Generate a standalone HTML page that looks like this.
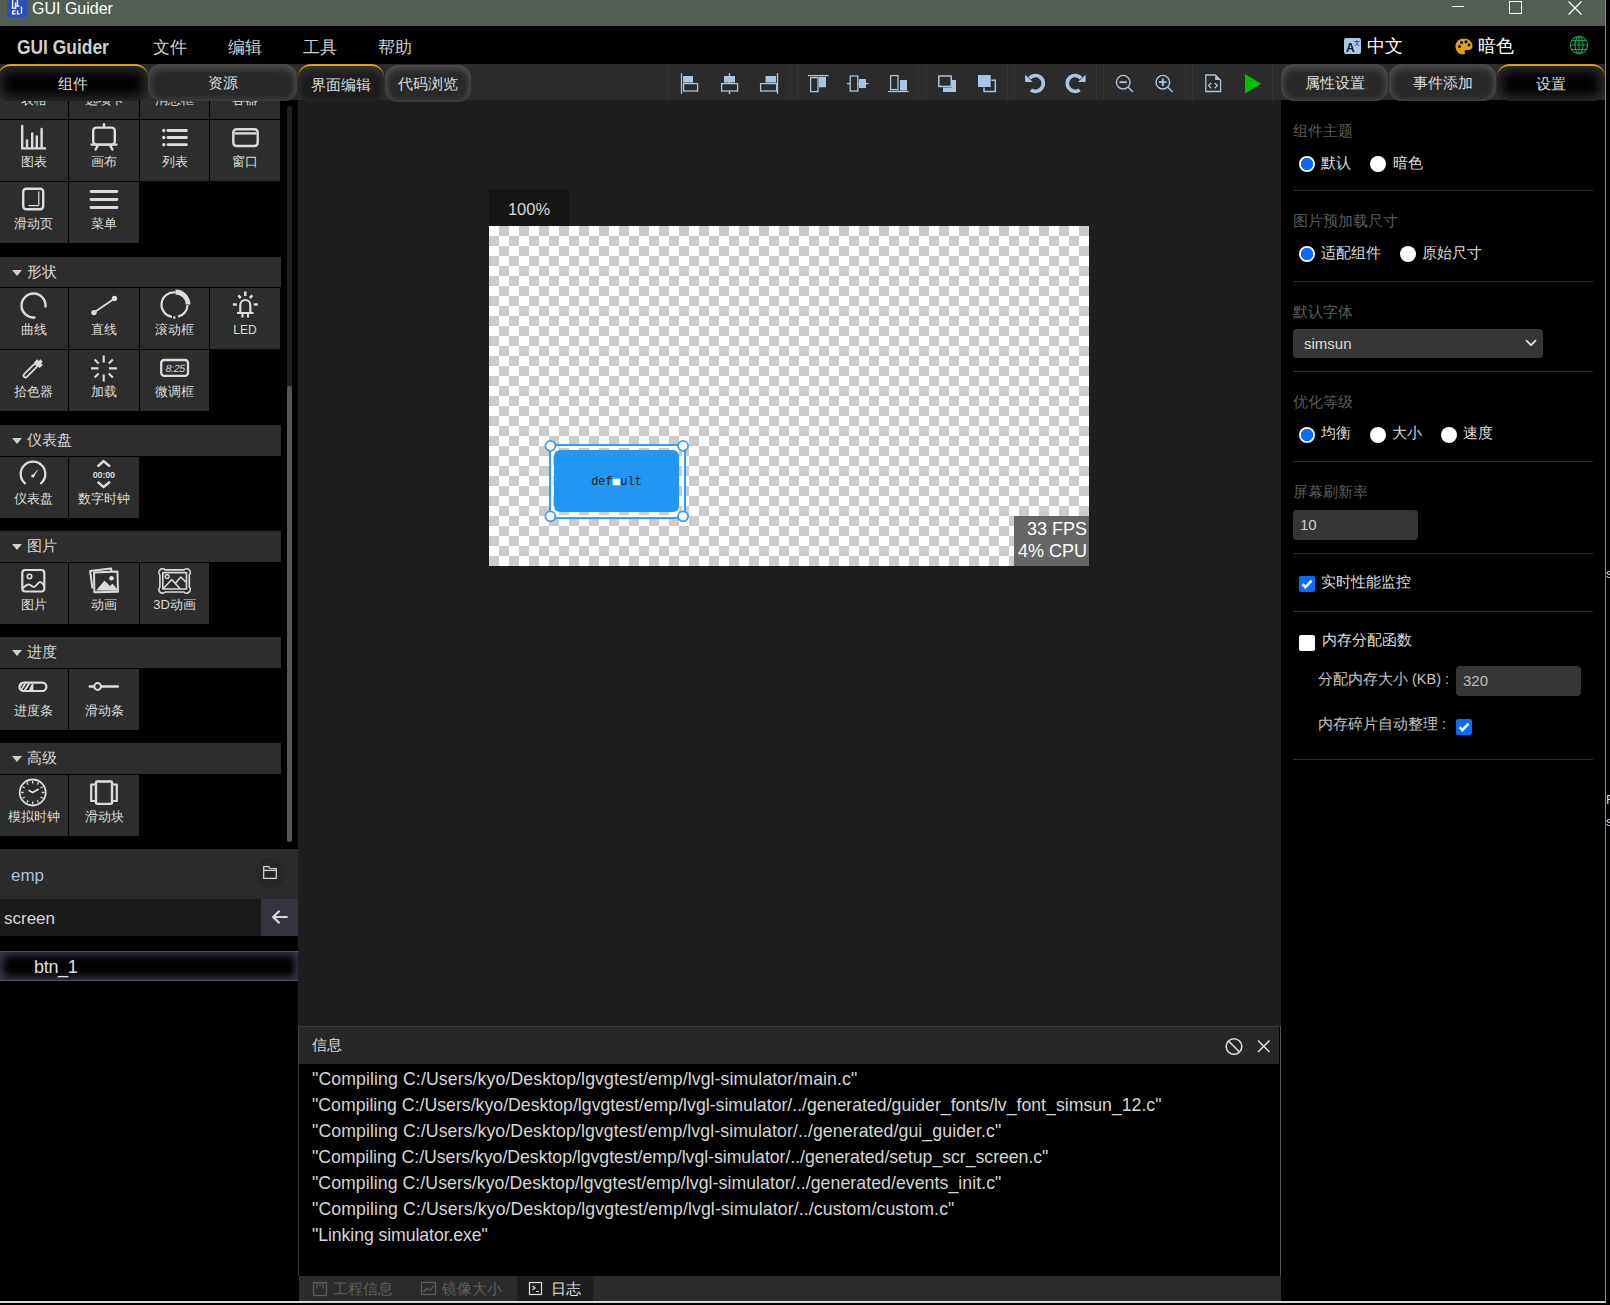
<!DOCTYPE html>
<html><head><meta charset="utf-8">
<style>
*{box-sizing:border-box;margin:0;padding:0}
html,body{width:1610px;height:1305px;overflow:hidden;background:#000;font-family:"Liberation Sans",sans-serif;color:#ddd}
.a{position:absolute;white-space:nowrap}
svg{position:absolute;overflow:visible}
#title{left:0;top:0;width:1606px;height:26px;background:#525e53}
#menubar{left:0;top:26px;width:1606px;height:38px;background:#000}
#tabrow{left:0;top:64px;width:1606px;height:36px;background:#2b2b2b}
.tab{position:absolute;z-index:3;top:64px;height:37px;border-radius:13px;text-align:center;font-size:15px;line-height:37px;color:#ddd}
.tab.off{background:#292929;box-shadow:inset 0 3px 8px 0 #525252,inset 0 0 7px 1px #404040}
.tab.on{background:#000;border-top:2px solid #e3a008;box-shadow:inset 0 0 12px 5px #2b2b2b;line-height:35px}
.tsep{position:absolute;top:64px;width:1px;height:36px;background:#343434}
.menu{position:absolute;top:37px;font-size:16.5px;line-height:20px;color:#d0d0d0}
#left{left:0;top:100px;width:298px;height:1201px;background:#000;overflow:hidden}
.cell{position:absolute;width:70px;height:61px;background:#2d2d2d;text-align:center;font-size:13px;color:#dcdcdc}
.cell svg{left:0;top:0;width:70px;height:61px}
.cell span{position:absolute;left:0;right:0;top:34px;line-height:16px}
.hdr{position:absolute;left:0;width:281px;height:30px;background:#2d2d2d;font-size:14.5px;line-height:30px;padding-left:27px;color:#d8d8d8}
.hdr:before{content:"";position:absolute;left:12px;top:13px;border-left:5px solid transparent;border-right:5px solid transparent;border-top:6px solid #cfcfcf}
#canvasarea{left:298px;top:100px;width:983px;height:926px;background:#1e1e1e}
#right{left:1281px;top:100px;width:324px;height:1201px;background:#000}
#info{left:298px;top:1026px;width:983px;height:275px;background:#000}
</style></head><body>
<!-- title bar -->
<div id="title" class="a"></div>
<div class="a" style="left:7px;top:0;width:20px;height:17px;background:#2a4fb8"></div>
<svg style="left:7px;top:0" width="20" height="17"><g fill="none" stroke="#fff" stroke-width="1.3"><path d="M5.6 0v8.2h2.3M10.4 0v5.5M8.6 2.5v6.5M9.5 6.2h2.8M14.5 6.5v7.3M5.6 10.8h3M5.6 10.8v3h3M10.5 10.5v3.3h2.2"/></g></svg>
<div class="a" style="left:32px;top:-1px;font-size:16px;line-height:20px;color:#fff">GUI Guider</div>
<div class="a" style="left:1452px;top:6px;width:12px;height:1px;background:#fff"></div>
<div class="a" style="left:1509px;top:1px;width:13px;height:13px;border:1px solid #fff"></div>
<svg style="left:1568px;top:1px" width="14" height="14"><path d="M0.5 0.5L13.5 13.5M13.5 0.5L0.5 13.5" stroke="#fff" stroke-width="1.1"/></svg>
<div class="a" style="left:0;top:1301px;width:1606px;height:2px;background:#d8d8d8"></div>
<div class="a" style="left:1606px;top:567px;font-size:13px;line-height:14px;color:#ddd">s</div><div class="a" style="left:1606px;top:793px;font-size:13px;line-height:14px;color:#ddd">F</div><div class="a" style="left:1606px;top:815px;font-size:13px;line-height:14px;color:#ddd">s</div>

<!-- menu bar -->
<div id="menubar" class="a"></div>
<div class="a" style="left:17px;top:36px;font-size:20px;font-weight:bold;line-height:22px;color:#cfcfcf;transform:scaleX(0.87);transform-origin:0 0">GUI Guider</div>
<div class="menu" style="left:153px">文件</div>
<div class="menu" style="left:228px">编辑</div>
<div class="menu" style="left:303px">工具</div>
<div class="menu" style="left:378px">帮助</div>
<svg style="left:1344px;top:38px" width="18" height="17"><rect x="0" y="0" width="17" height="16" rx="2" fill="#a8c8e6"/><text x="2" y="14" font-family="Liberation Sans" font-size="12" font-weight="bold" fill="#111">A</text><text x="10" y="7" font-size="6" fill="#111">文</text></svg>
<div class="a" style="left:1367px;top:35px;font-size:18px;line-height:22px;color:#fff">中文</div>
<svg style="left:1455px;top:38px" width="18" height="17" viewBox="0 0 18 17"><path d="M9 0.5C4 0.5 0.5 4 0.5 8.5c0 4.5 3.5 8 8 8 1.5 0 2-1 1.3-2.2-.7-1.2 0-2.3 1.4-2.3h2.3c2.5 0 4-1.5 4-4C17.5 3.5 13.7 0.5 9 0.5z" fill="#e0a010"/><circle cx="4.5" cy="8.5" r="1.5" fill="#000"/><circle cx="6.5" cy="4.5" r="1.5" fill="#000"/><circle cx="11" cy="3.8" r="1.5" fill="#000"/><circle cx="14" cy="7" r="1.4" fill="#000"/></svg>
<div class="a" style="left:1478px;top:35px;font-size:18px;line-height:22px;color:#fff">暗色</div>
<svg style="left:1569px;top:35px" width="20" height="20" viewBox="0 0 20 20"><g fill="none" stroke="#1f9a55" stroke-width="1.15"><circle cx="10" cy="10" r="8.6"/><ellipse cx="10" cy="10" rx="4" ry="8.6"/><path d="M10 1.4v17.2M1.4 10h17.2M2.8 5.5h14.4M2.8 14.5h14.4"/></g></svg>

<!-- tab row -->
<div id="tabrow" class="a"></div>
<div class="tab on" style="left:-2px;width:150px">组件</div>
<div class="tab off" style="left:148px;width:149px">资源</div>
<div class="tab on" style="left:298px;width:86px;height:38px;background:#1d1d1d;box-shadow:inset 0 6px 10px -2px #353535,inset 0 0 6px 2px #2a2a2a;line-height:37px">界面编辑</div>
<div class="tab off" style="left:385px;width:86px;top:65px;height:37px;line-height:38px">代码浏览</div>
<div class="tab off" style="left:1281px;width:107px">属性设置</div>
<div class="tab off" style="left:1389px;width:107px">事件添加</div>
<div class="tab on" style="left:1497px;width:108px">设置</div>
<!-- toolbar -->
<div class="tsep" style="left:668px"></div>
<div class="tsep" style="left:790px"></div><div class="tsep" style="left:797px"></div>
<div class="tsep" style="left:918px"></div><div class="tsep" style="left:926px"></div>
<div class="tsep" style="left:1007px"></div><div class="tsep" style="left:1014px"></div>
<div class="tsep" style="left:1096px"></div><div class="tsep" style="left:1103px"></div>
<div class="tsep" style="left:1185px"></div><div class="tsep" style="left:1192px"></div>
<div class="tsep" style="left:1272px"></div>
<svg style="left:0;top:0" width="1610" height="110">
<g fill="none" stroke="#a9c7e2" stroke-width="1.3">
 <path d="M681.5 73v21"/><rect x="683.6" y="83.6" width="14" height="7.4"/>
 <path d="M729.5 73v11M729.5 91v3"/><rect x="721.6" y="83.6" width="16" height="7.4"/>
 <path d="M777.5 73v21"/><rect x="760.6" y="83.6" width="16" height="7.4"/>
 <path d="M808 75.6h20.5"/><rect x="810.6" y="77.6" width="7.4" height="14"/>
 <path d="M847 83.6h3.2M857.8 83.6h10.7"/><rect x="850.2" y="76" width="7.6" height="15"/>
 <path d="M888 91.5h20.5"/><rect x="890.6" y="75.6" width="7.4" height="14"/>
 <rect x="938.8" y="76" width="12.4" height="10.4" stroke-width="1.5"/>
 <path d="M984 87.5v4h11.3v-11.3h-4" stroke-width="1.5"/>
</g>
<g fill="#a9c7e2">
 <rect x="683" y="76" width="10" height="6.5"/>
 <rect x="724" y="76" width="11" height="6.5"/>
 <rect x="765.5" y="76" width="10.5" height="6.5"/>
 <rect x="819" y="77" width="7" height="10.3"/>
 <rect x="859" y="79" width="7" height="9"/>
 <rect x="900" y="80" width="7" height="10.5"/>
 <path d="M943 87.5h9v-7.5h4v12h-13z"/>
 <rect x="978" y="75" width="12.7" height="12"/>
</g>
<g fill="none" stroke="#a9c7e2" stroke-width="3">
 <path d="M1029.5 78.2A7.9 7.9 0 1 1 1030.9 89.9" stroke-width="3.7"/>
 <path d="M1081.1 78.2A7.9 7.9 0 1 0 1079.7 89.9" stroke-width="3.7"/>
</g>
<g fill="#a9c7e2">
 <path d="M1025.1 74.8v7.1h7.6z"/>
 <path d="M1085.6 74.8v7.1h-7.6z"/>
</g>
<g fill="none" stroke="#a9c7e2" stroke-width="1.4">
 <circle cx="1123.2" cy="82.2" r="6.8"/><path d="M1128 87l5 5"/><path d="M1119.5 82.2h7.4" stroke-width="1.8"/>
 <circle cx="1162.8" cy="82.2" r="6.8"/><path d="M1167.6 87l5 5"/><path d="M1159 82.2h7.4M1162.8 78.5v7.4" stroke-width="1.8"/>
 <path d="M1205.8 75h9.5l5.3 5.3v11.2h-14.8z" stroke-width="1.3"/>
 <path d="M1211.2 83l-2.7 2.6 2.7 2.6M1214.6 83l2.7 2.6-2.7 2.6" stroke-width="1.3"/><path d="M1215.2 75.5v4.6h4.9z" fill="#a9c7e2" stroke="none"/>
</g>
<path d="M1245 74l16.2 9.7-16.2 9.7z" fill="#00c000"/>
</svg>
<!-- left panel -->
<div id="left" class="a">
<div class="cell" style="left:-1px;top:-42px;width:69px"><span>表格</span></div>
<div class="cell" style="left:69px;top:-42px"><span>选项卡</span></div>
<div class="cell" style="left:140px;top:-42px;width:69px"><span>消息框</span></div>
<div class="cell" style="left:210px;top:-42px"><span>容器</span></div>

<div class="cell" style="left:-1px;top:20px;width:69px"><span>图表</span></div>
<div class="cell" style="left:69px;top:20px"><span>画布</span></div>
<div class="cell" style="left:140px;top:20px;width:69px"><span>列表</span></div>
<div class="cell" style="left:210px;top:20px"><span>窗口</span></div>
<div class="cell" style="left:-1px;top:82px;width:69px"><span>滑动页</span></div>
<div class="cell" style="left:69px;top:82px"><span>菜单</span></div>

<div class="hdr" style="top:157px">形状</div>
<div class="cell" style="left:-1px;top:188px;width:69px"><span>曲线</span></div>
<div class="cell" style="left:69px;top:188px"><span>直线</span></div>
<div class="cell" style="left:140px;top:188px;width:69px"><span>滚动框</span></div>
<div class="cell" style="left:210px;top:188px"><span style="font-size:12px">LED</span></div>
<div class="cell" style="left:-1px;top:250px;width:69px"><span>拾色器</span></div>
<div class="cell" style="left:69px;top:250px"><span>加载</span></div>
<div class="cell" style="left:140px;top:250px;width:69px"><span>微调框</span></div>

<div class="hdr" style="top:325px;height:31px">仪表盘</div>
<div class="cell" style="left:-1px;top:357px;width:69px"><span>仪表盘</span></div>
<div class="cell" style="left:69px;top:357px"><span>数字时钟</span></div>

<div class="hdr" style="top:431px;height:31px">图片</div>
<div class="cell" style="left:-1px;top:463px;width:69px"><span>图片</span></div>
<div class="cell" style="left:69px;top:463px"><span>动画</span></div>
<div class="cell" style="left:140px;top:463px;width:69px"><span>3D动画</span></div>

<div class="hdr" style="top:537px;height:31px">进度</div>
<div class="cell" style="left:-1px;top:569px;width:69px"><span>进度条</span></div>
<div class="cell" style="left:69px;top:569px"><span>滑动条</span></div>

<div class="hdr" style="top:643px;height:31px">高级</div>
<div class="cell" style="left:-1px;top:675px;width:69px"><span>模拟时钟</span></div>
<div class="cell" style="left:69px;top:675px"><span>滑动块</span></div>

<div class="a" style="left:287px;top:6px;width:5px;height:736px;border-radius:3px;background:#1f1f1f"></div>
<div class="a" style="left:287px;top:286px;width:5px;height:456px;border-radius:3px;background:#555"></div>

<div class="a" style="left:0;top:749px;width:298px;height:50px;background:#2b2b2b"></div>
<div class="a" style="left:11px;top:766px;font-size:17px;line-height:20px;color:#a9c3da">emp</div>
<div class="a" style="left:255px;top:758px;width:30px;height:30px;border-radius:15px;background:#262626"></div>
<svg style="left:263px;top:766px" width="14" height="13"><path d="M0.7 2.5V0.7h5l1.2 1.8h6.4v9.8H0.7z M0.7 4.4h12.6" fill="none" stroke="#d8d8d8" stroke-width="1.2"/></svg>
<div class="a" style="left:0;top:799px;width:261px;height:37px;background:#1a1a1a"></div>
<div class="a" style="left:4px;top:809px;font-size:17px;line-height:20px;color:#d8d8d8">screen</div>
<div class="a" style="left:261px;top:799px;width:37px;height:37px;background:#34343e"></div>
<svg style="left:271px;top:809px" width="18" height="16"><path d="M1.5 8h15.2M8.6 1.8L2.2 8l6.4 6.2" fill="none" stroke="#d8d8d8" stroke-width="2.2"/></svg>
<div class="a" style="left:0;top:851px;width:298px;height:30px;background:#000;border-top:1px solid #55535f;border-bottom:1px solid #55535f;box-shadow:inset 0 0 8px 3px #3c3a50"></div>
<div class="a" style="left:34px;top:857px;font-size:18px;letter-spacing:-0.3px;line-height:20px;color:#e0e0e0">btn_1</div>
</div>
<svg style="left:0;top:0" width="300" height="850">
<g fill="none" stroke="#dcdcdc" stroke-width="2.4" stroke-linejoin="round">
 <!-- chart -->
 <path d="M22.2 126v22.4H45M27 147.5v-7M32.2 147.5v-14M36.8 147.5v-11M41.6 147.5v-18.5" stroke-linecap="round"/>
 <!-- easel -->
 <path d="M104 124.2v3" stroke-linecap="round"/><rect x="93.2" y="127.6" width="21.6" height="17" rx="3"/><path d="M91.6 144.6h24.8M97.8 145.5l-2.2 4M110.2 145.5l2.2 4" stroke-linecap="round"/>
 <!-- list -->
 <path d="M168 130.5h18.5M168 137.5h18.5M168 144.7h18.5" stroke-width="2.8" stroke-linecap="round"/>
 <!-- window -->
 <rect x="233.3" y="129.2" width="24.4" height="16.8" rx="3.2"/><path d="M234.5 133.4h22" stroke-width="2.4"/>
 <!-- slide page -->
 <rect x="23.2" y="188.8" width="20" height="20.4" rx="3"/><path d="M28.5 205.6h10.5M38.8 191.5v13.8" stroke-width="1.2"/>
 <!-- menu -->
 <path d="M91 191.5h26M91 199.5h26M91 207.5h26" stroke-width="2.8" stroke-linecap="round"/>
 <!-- curve -->
 <path d="M34.5 317.5A12 12 0 1 1 45.5 306.5" stroke-linecap="round"/>
 <!-- line -->
 <path d="M94 312.6L114.5 298.5" stroke-width="1.8"/>
 <!-- roller -->
 <path d="M175.5 292a12.5 12.5 0 0 1 12.5 12.5" stroke-width="4.8" stroke-linecap="butt"/>
 <path d="M187.5 305a12 12 0 0 1-9.5 11.7M172 316.8A12 12 0 0 1 175.5 292.5" stroke-width="2.2"/>
 <!-- LED -->
 <path d="M240.3 312.5v-7.5a5 5 0 0 1 10 0v7.5M237 313h16.5M242.5 314v3.6M248 314v3.6" stroke-width="2.2"/>
 <path d="M245.3 291.5v4.5M238.2 295.4l2.6 2.6M252.4 295.4l-2.6 2.6M232.8 304.5h4M253.8 304.5h4" stroke-width="2.5"/>
 <!-- eyedropper -->
 <path d="M25.5 375.5l9.5-9.5" stroke-width="5.6" stroke-linecap="round"/>
 <!-- spinner -->
 <path d="M103.7 355.5v7M103.7 374.5v7M91 368.4h7.5M109 368.4h8M94.6 359.4l4 4M108.8 373.5l4 4M112.8 359.4l-4 4M98.6 373.5l-4 4" stroke-width="2.1"/>
 <!-- spinbox -->
 <rect x="161.2" y="360" width="26.8" height="15.8" rx="3" stroke-width="2.3"/>
 <!-- gauge -->
 <path d="M25 483.3a12.3 12.3 0 1 1 16 0" stroke-width="2.3" stroke-linecap="round"/>
 <!-- digital clock -->
 <path d="M97.6 466.5l6-5.4 6.4 5.4M97.6 481.8l6 5.2 6.4-5.2" stroke-width="2.4"/>
 <!-- image -->
 <rect x="22.3" y="570" width="22" height="21.5" rx="3" stroke-width="2.2"/>
 <circle cx="29.5" cy="576.5" r="2.2" stroke-width="1.6"/>
 <path d="M22.5 588.5c2-2 4.5-4.5 6.5-4 2 .5 3 2.5 5 2.5s4-5 6-5 3.5 2.5 4.2 3.5" stroke-width="2"/>
 <!-- animation -->
 <path d="M92.5 588.5l-2.4-17.6 21-2.4 .4 3" stroke-width="2"/>
 <path d="M94 572.4l23.4-.8.6 20.2-23.6.4z" stroke-width="2"/>
 <!-- 3D animation -->
 <path d="M165.2 569.9h18.7a3.4 3.4 0 1 1 5.4 5.1v12a3.4 3.4 0 1 1-5.4 5h-18.7a3.4 3.4 0 1 1-5.3-5v-12a3.4 3.4 0 1 1 5.3-5.1z" stroke-width="1.6"/>
 <rect x="162.8" y="572.6" width="23.7" height="16.4" stroke-width="1.6"/>
 <circle cx="167.2" cy="576.6" r="1.9" stroke-width="1.4"/>
 <path d="M163.5 588.5l8.2-9 8.2 9M175.2 583.6l5.6-6.6 5.8 5.8" stroke-width="1.6"/>
 <!-- progress bar -->
 <rect x="19.4" y="682.6" width="27" height="8.4" rx="4.2" stroke-width="2.2"/>
 <!-- slider -->
 <path d="M89.8 686.5h4M101.2 686.5h16.6" stroke-width="2.6" stroke-linecap="round"/><circle cx="97.6" cy="686.5" r="3.4" stroke-width="2"/>
 <!-- analog clock -->
 <circle cx="32.7" cy="792.5" r="13" stroke-width="1.8"/>
 <path d="M28.5 790.2l4.2 2.4 6-3.6" stroke-width="1.7"/>
 <path d="M32.7 781v2.4M32.7 801.6v2.4M21.2 792.5h2.4M41.8 792.5h2.4M38.45 782.5l-1.2 2.1M26.95 802.5l1.2-2.1M42.7 786.75l-2.1 1.2M22.7 798.25l2.1-1.2M42.7 798.25l-2.1-1.2M22.7 786.75l2.1 1.2M38.45 802.5l-1.2-2.1M26.95 782.5l1.2 2.1" stroke-width="1.3"/>
 <!-- carousel -->
 <rect x="96" y="781.5" width="16" height="22.4" rx="1.2" stroke-width="2.4"/><path d="M95.5 784.5h-4.3v16.5h4.3M112.5 784.5h4.3v16.5h-4.3" stroke-width="2.2"/>
</g>
<g fill="#dcdcdc">
 <circle cx="163.8" cy="130.5" r="1.7"/><circle cx="163.8" cy="137.5" r="1.7"/><circle cx="163.8" cy="144.7" r="1.7"/>
 <circle cx="94" cy="312.6" r="2.7"/><circle cx="114.5" cy="298.5" r="2.7"/>
 <circle cx="174.3" cy="317.6" r="1.3"/>
 <path d="M34 362.5l3.2-3.2 1.6 1.6 1.6-1.6 2.4 2.4-1.6 1.6 1.6 1.6-3.2 3.2z"/>
 <path d="M32 475.8l6.8-7.2-5.2 8.6z"/><circle cx="32.8" cy="476" r="1.6"/>
 <text x="103.8" y="477.6" font-family="Liberation Sans" font-size="9" font-weight="bold" text-anchor="middle" letter-spacing="-0.2">00:00</text>
 <circle cx="111.5" cy="578.3" r="2.3"/>
 <path d="M96 590.5l8.5-10 5.5 5.5 2.5-2.5 4.5 5.5v1.8z"/>
 <path d="M19.5 684.2h3.2l-3.8 5.2z M24 683.6h2.4l-4.6 6.8h-1.6z M28 683.6h2.4l-4.6 6.8h-2.4z M32 683.6h1.4v6.8h-4.6z"/>
</g>
<circle cx="29.6" cy="370" r="0.01"/>
<path d="M25.5 375.5l9.5-9.5" stroke="#2d2d2d" stroke-width="2" stroke-linecap="round"/>
<g transform="translate(174.6 372.2) skewX(-12)"><text x="0" y="0" font-family="Liberation Sans" font-size="10.5" text-anchor="middle" fill="#dcdcdc" letter-spacing="-0.3">8:25</text></g>
</svg>
<!-- canvas area -->
<div id="canvasarea" class="a"></div>
<div class="a" style="left:489px;top:189px;width:80px;height:37px;background:#161616;color:#d8d8d8;font-size:16.5px;line-height:40px;text-align:center">100%</div>
<div class="a" style="left:489px;top:226px;width:600px;height:340px;background:repeating-conic-gradient(#ccc 0 25%,#fff 0 50%) 0 0/20px 20px"></div>
<div class="a" style="left:554px;top:450px;width:125px;height:62px;background:#2196f3;border-radius:6px"></div>
<div class="a" style="left:548.5px;top:444px;width:137.5px;height:75px;border:2px solid #36a0ef;box-shadow:inset 0 0 0 2px rgba(255,255,255,.85)"></div>
<svg style="left:0;top:0" width="1100" height="600"><g fill="#fff" stroke="#36a0ef" stroke-width="1.8"><circle cx="550.4" cy="445.8" r="5"/><circle cx="683.1" cy="445.8" r="5"/><circle cx="550.4" cy="516.3" r="5"/><circle cx="683.1" cy="516.3" r="5"/></g></svg>
<div class="a" style="left:554px;top:474px;width:125px;text-align:center;font-family:'Liberation Mono',monospace;font-size:12px;line-height:16px;color:#222">def<span style="display:inline-block;width:6.5px;height:6.5px;background:#fff;vertical-align:0px;margin:0 0.5px;box-shadow:0 0 0 .5px #7ee"></span>ult</div>
<div class="a" style="left:1014px;top:516px;width:75px;height:50px;background:#666"></div>
<div class="a" style="left:1014px;top:518px;width:73px;text-align:right;font-size:18px;line-height:22px;color:#fff">33 FPS<br>4% CPU</div>
<!-- right panel -->
<div id="right" class="a"></div>
<style>
.lbl{position:absolute;font-size:14.5px;line-height:18px;color:#5c5c5c}
.txt{position:absolute;font-size:14.5px;line-height:18px;color:#dedede}
.rsep{position:absolute;left:1293px;width:300px;height:1px;background:#2c2c2c}
.rad{position:absolute;width:16px;height:16px;border-radius:8px;background:#fff}
.rad.on{background:radial-gradient(circle at 50% 50%,#0a6cff 0 5.9px,#fff 6.5px)}
.inp{position:absolute;background:#363636;border-radius:4px;font-size:15px;color:#cfcfcf;padding-left:7px}
.chk{position:absolute;width:16px;height:16px;border-radius:2px;background:#0a6cff}
</style>
<div class="lbl" style="left:1293px;top:122px">组件主题</div>
<div class="rad on" style="left:1298.5px;top:155.5px"></div><div class="txt" style="left:1321px;top:154px">默认</div>
<div class="rad" style="left:1369.5px;top:155.5px"></div><div class="txt" style="left:1393px;top:154px">暗色</div>
<div class="rsep" style="top:190px"></div>
<div class="lbl" style="left:1293px;top:212px">图片预加载尺寸</div>
<div class="rad on" style="left:1298.5px;top:246px"></div><div class="txt" style="left:1321px;top:244px">适配组件</div>
<div class="rad" style="left:1399.5px;top:246px"></div><div class="txt" style="left:1422px;top:244px">原始尺寸</div>
<div class="rsep" style="top:281px"></div>
<div class="lbl" style="left:1293px;top:303px">默认字体</div>
<div class="inp" style="left:1293px;top:329px;width:250px;height:29px;line-height:29px;padding-left:11px;color:#dcdcdc">simsun</div>
<svg style="left:1525px;top:339px" width="12" height="8"><path d="M1 1.2l5 5 5-5" fill="none" stroke="#ddd" stroke-width="1.8"/></svg>
<div class="rsep" style="top:371px"></div>
<div class="lbl" style="left:1293px;top:393px">优化等级</div>
<div class="rad on" style="left:1298.5px;top:426.5px"></div><div class="txt" style="left:1321px;top:424px">均衡</div>
<div class="rad" style="left:1369.5px;top:426.5px"></div><div class="txt" style="left:1392px;top:424px">大小</div>
<div class="rad" style="left:1440.5px;top:426.5px"></div><div class="txt" style="left:1463px;top:424px">速度</div>
<div class="rsep" style="top:461px"></div>
<div class="lbl" style="left:1293px;top:483px">屏幕刷新率</div>
<div class="inp" style="left:1293px;top:510px;width:125px;height:30px;line-height:30px">10</div>
<div class="rsep" style="top:553px"></div>
<div class="chk" style="left:1299px;top:576px"></div>
<svg style="left:1299px;top:576px" width="16" height="16"><path d="M3.5 8.2l3 3 6-6.6" fill="none" stroke="#fff" stroke-width="2.5"/></svg>
<div class="txt" style="left:1321px;top:573px">实时性能监控</div>
<div class="rsep" style="top:611px"></div>
<div class="chk" style="left:1299px;top:635px;background:#fff"></div>
<div class="txt" style="left:1322px;top:631px">内存分配函数</div>
<div class="txt" style="left:1318px;top:670px;color:#c4c4c4">分配内存大小 (KB) :</div>
<div class="inp" style="left:1456px;top:666px;width:125px;height:30px;line-height:30px;color:#bdbdbd">320</div>
<div class="txt" style="left:1318px;top:715px;color:#c4c4c4">内存碎片自动整理 :</div>
<div class="chk" style="left:1456px;top:719px"></div>
<svg style="left:1456px;top:719px" width="16" height="16"><path d="M3.5 8.2l3 3 6-6.6" fill="none" stroke="#fff" stroke-width="2.5"/></svg>
<div class="rsep" style="top:759px"></div>

<!-- info panel -->
<div id="info" class="a"></div>
<div class="a" style="left:298px;top:1026px;width:983px;height:1px;background:#3c3c3c"></div>
<div class="a" style="left:298px;top:1026px;width:1px;height:250px;background:#3c3c3c"></div>
<div class="a" style="left:1280px;top:1026px;width:1px;height:250px;background:#555"></div>
<div class="a" style="left:299px;top:1027px;width:980px;height:37px;background:#272727"></div>
<div class="a" style="left:312px;top:1035px;font-size:15px;line-height:20px;color:#dcdcdc">信息</div>
<svg style="left:1220px;top:1032px" width="60" height="28"><g fill="none" stroke="#dcdcdc" stroke-width="1.6"><circle cx="14" cy="14.5" r="7.8"/><path d="M8.5 9l11 11"/><path d="M38 8.5l11.5 11.5M49.5 8.5L38 20"/></g></svg>
<div class="a" style="left:312px;top:1066px;font-size:17.7px;line-height:26px;color:#d6d6d6">
<div class="ll" style="letter-spacing:0.104px">"Compiling C:/Users/kyo/Desktop/lgvgtest/emp/lvgl-simulator/main.c"</div>
<div class="ll" style="letter-spacing:0.003px">"Compiling C:/Users/kyo/Desktop/lgvgtest/emp/lvgl-simulator/../generated/guider_fonts/lv_font_simsun_12.c"</div>
<div class="ll" style="letter-spacing:0.097px">"Compiling C:/Users/kyo/Desktop/lgvgtest/emp/lvgl-simulator/../generated/gui_guider.c"</div>
<div class="ll" style="letter-spacing:-0.029px">"Compiling C:/Users/kyo/Desktop/lgvgtest/emp/lvgl-simulator/../generated/setup_scr_screen.c"</div>
<div class="ll" style="letter-spacing:0.062px">"Compiling C:/Users/kyo/Desktop/lgvgtest/emp/lvgl-simulator/../generated/events_init.c"</div>
<div class="ll" style="letter-spacing:0.110px">"Compiling C:/Users/kyo/Desktop/lgvgtest/emp/lvgl-simulator/../custom/custom.c"</div>
<div class="ll" style="letter-spacing:-0.084px">"Linking simulator.exe"</div>
</div>
<div class="a" style="left:299px;top:1276px;width:982px;height:25px;background:#2b2b2b"></div>
<div class="a" style="left:517px;top:1276px;width:76px;height:25px;background:#1e1e1e"></div>
<svg style="left:300px;top:1276px" width="300" height="25"><g fill="none" stroke="#5e5e5e" stroke-width="1.2"><rect x="13.5" y="6.5" width="13" height="13"/><path d="M17 6.5v6M20 6.5v4M23 6.5v6"/><rect x="121.5" y="6.5" width="14" height="12"/><path d="M123.5 16l3.5-4 3 2.5 4-5"/></g><g fill="none" stroke="#dcdcdc" stroke-width="1.2"><rect x="229.5" y="6.5" width="12" height="12"/><path d="M232.5 10l2.5 2-2.5 2M236 15.5h3"/></g></svg>
<div class="a" style="left:333px;top:1279px;font-size:15px;line-height:20px;color:#5e5e5e">工程信息</div>
<div class="a" style="left:442px;top:1279px;font-size:15px;line-height:20px;color:#5e5e5e">镜像大小</div>
<div class="a" style="left:551px;top:1279px;font-size:15px;line-height:20px;color:#e0e0e0">日志</div>
<div class="a" style="left:1605px;top:0;width:1px;height:1302px;background:#8a8f8a"></div>
</body></html>
